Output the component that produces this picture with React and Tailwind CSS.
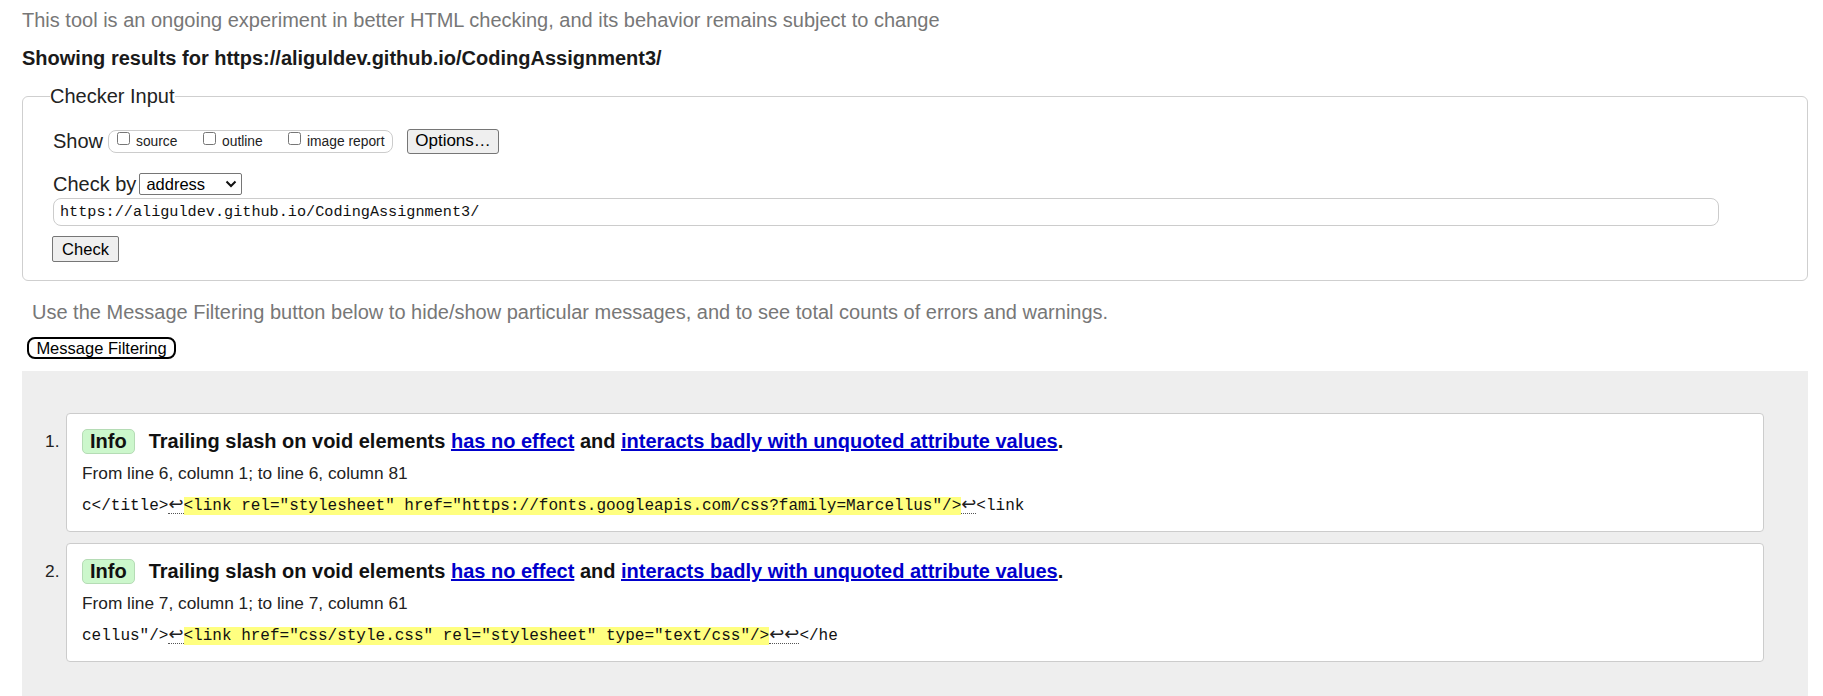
function Ret({ n = 1 }) {
  return (
    <span className="inline-block border-b border-dotted border-[#555] font-['DejaVu_Sans',sans-serif] text-[18px] leading-[18px] text-[#222]">
      {"↩".repeat(n)}
    </span>
  );
}

function Mark({ children }) {
  return <span className="bg-[#ffff80]">{children}</span>;
}

function Message({ num, from, code }) {
  return (
    <div className="flex">
      <span className="w-[21px] shrink-0 pt-[14px] text-[17.3px] leading-[28px] text-[#222]">{num}.</span>
      <div className="flex-1 bg-white border border-[#cccccc] rounded-[4px] pl-[15px] pt-[13px] pb-[14px]">
        <div className="flex items-center h-[28px]">
          <span className="inline-flex items-center h-[25px] px-[7px] border border-[#b5dcb5] bg-[#ccf7cc] rounded-[5px] text-[20px] font-bold text-[#111]">
            Info
          </span>
          <span className="ml-[14px] text-[20px] font-bold leading-[28px] whitespace-nowrap text-[#111]">
            Trailing slash on void elements{" "}
            <a className="text-[#0000cc] underline">has no effect</a> and{" "}
            <a className="text-[#0000cc] underline">interacts badly with unquoted attribute values</a>.
          </span>
        </div>
        <div className="mt-[7px] h-[22px] leading-[22px] text-[17.3px] text-[#222]">{from}</div>
        <div className="mt-[11px] h-[22px] leading-[22px] font-['Liberation_Mono',monospace] text-[16px] text-[#111] whitespace-pre">
          {code}
        </div>
      </div>
    </div>
  );
}

function CheckItem({ label, w }) {
  return (
    <div className={`flex items-start ${w}`}>
      <input type="checkbox" className="m-0 mt-[1px] w-[13px] h-[13px]" readOnly />
      <span className="ml-[6px] mt-[3px] text-[13.8px] leading-[16px] text-[#222]">{label}</span>
    </div>
  );
}

export default function App() {
  return (
    <div className="min-h-screen bg-white font-['Liberation_Sans',Arial,sans-serif] text-[#222]">
      <div className="pl-[22px] pr-[15px]">
        <p className="pt-[8px] h-[32px] text-[20px] leading-[24px] text-[#777]">
          This tool is an ongoing experiment in better HTML checking, and its behavior remains subject to change
        </p>
        <p className="mt-[14px] h-[24px] text-[20px] leading-[24px] font-bold text-[#1a1a1a]">
          Showing results for https://aliguldev.github.io/CodingAssignment3/
        </p>

        <fieldset className="mt-[14px] border border-[#cfcfcf] rounded-[6px] pl-[27px] pr-[20px] pb-[18px]">
          <legend className="text-[20px] leading-[24px] text-[#222]">Checker Input</legend>
          <div className="pl-[3px] pt-[20px]">
            <div className="flex items-center h-[26px]">
              <span className="text-[20px] leading-[24px]">Show</span>
              <div className="ml-[5px] h-[23px] w-[285px] border border-[#cccccc] rounded-[8px] flex items-start pl-[8px]">
                <CheckItem label="source" w="w-[86px]" />
                <CheckItem label="outline" w="w-[85px]" />
                <CheckItem label="image report" w="w-[100px]" />
              </div>
              <div className="ml-[14px] h-[25px] w-[92px] border border-[#767676] bg-[#efefef] rounded-[3px] flex items-center justify-center text-[17px] text-black">
                Options…
              </div>
            </div>

            <div className="mt-[18px] flex items-center h-[24px]">
              <span className="text-[20px] leading-[24px]">Check by</span>
              <div className="ml-[3px] h-[22px] w-[103px] border border-[#767676] rounded-[2px] bg-white flex items-center justify-between pl-[6px] pr-[4px] text-[16.5px] text-black">
                <span>address</span>
                <svg width="12" height="8" viewBox="0 0 12 8">
                  <path d="M1.5 1.5 L6 6 L10.5 1.5" fill="none" stroke="#111" strokeWidth="2" />
                </svg>
              </div>
            </div>

            <div className="mt-[2px] h-[28px] w-[1666px] border border-[#cccccc] rounded-[8px] flex items-center pl-[6px] pt-[1px] font-['Liberation_Mono',monospace] text-[15.2px] text-[#111]">
              https://aliguldev.github.io/CodingAssignment3/
            </div>

            <div className="mt-[10px] -ml-[1px] h-[26px] w-[67px] border border-[#767676] bg-[#efefef] rounded-[2px] flex items-center justify-center text-[16.5px] text-black">
              Check
            </div>
          </div>
        </fieldset>

        <p className="mt-[19px] ml-[10px] h-[24px] text-[20px] leading-[24px] text-[#777]">
          Use the Message Filtering button below to hide/show particular messages, and to see total counts of errors and warnings.
        </p>
        <div className="mt-[13px] ml-[5px] h-[22px] w-[149px] border-2 border-black rounded-[8px] bg-white flex items-center justify-center text-[16.5px] text-black">
          Message Filtering
        </div>

        <div className="mt-[12px] bg-[#eeeeee] pt-[42px] pb-[40px] pl-[23px] pr-[44px] flex flex-col gap-[11px]">
          <Message
            num={1}
            from="From line 6, column 1; to line 6, column 81"
            code={
              <>
                {"c</title>"}
                <Ret />
                <Mark>{'<link rel="stylesheet" href="https://fonts.googleapis.com/css?family=Marcellus"/>'}</Mark>
                <Ret />
                {"<link"}
              </>
            }
          />
          <Message
            num={2}
            from="From line 7, column 1; to line 7, column 61"
            code={
              <>
                {'cellus"/>'}
                <Ret />
                <Mark>{'<link href="css/style.css" rel="stylesheet" type="text/css"/>'}</Mark>
                <Ret n={2} />
                {"</he"}
              </>
            }
          />
        </div>
      </div>
    </div>
  );
}
